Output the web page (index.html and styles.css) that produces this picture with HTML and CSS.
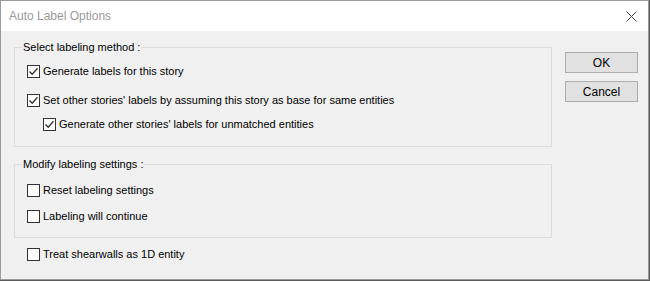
FILE: index.html
```html
<!DOCTYPE html>
<html lang="en">

<head>
    <meta charset="UTF-8">
    <title>Auto Label Options</title>
    <link rel="stylesheet" href="styles.css">
</head>

<body>
    <div id="dialog">
        <div class="titlebar">
            <span class="title">Auto Label Options</span>
            <svg class="close" width="11" height="11" viewBox="0 0 11 11">
                <path d="M0.5 0.5 L10.5 10.5 M10.5 0.5 L0.5 10.5" stroke="#444" stroke-width="1" fill="none" />
            </svg>
        </div>
        <div class="content">
            <div class="options">
                <fieldset class="group first">
                    <legend>Select labeling method :</legend>
                    <div class="row r1"><span class="box checked"></span>Generate labels for this story</div>
                    <div class="row r2"><span class="box checked"></span>Set other stories' labels by assuming this story as base for same entities</div>
                    <div class="row r3 sub"><span class="box checked"></span>Generate other stories' labels for unmatched entities</div>
                </fieldset>
                <fieldset class="group second">
                    <legend>Modify labeling settings :</legend>
                    <div class="row r4"><span class="box"></span>Reset labeling settings</div>
                    <div class="row r5"><span class="box"></span>Labeling will continue</div>
                </fieldset>
                <div class="row alone"><span class="box"></span>Treat shearwalls as 1D entity</div>
            </div>
            <div class="buttons">
                <div class="btn">OK</div>
                <div class="btn">Cancel</div>
            </div>
        </div>
    </div>
</body>

</html>
```

FILE: styles.css
```css
* {
    margin: 0;
    padding: 0;
    box-sizing: border-box;
}

body {
    background-color: #5a5a5a;
    font-family: "Liberation Sans", Arial, sans-serif;
    font-size: 11px;
    color: #000;
}

#dialog {
    width: 649px;
    height: 280px;
    border: 1px solid #9a9a9a;
    background-color: #f0f0f0;
}

.titlebar {
    height: 30px;
    background-color: #fff;
    display: flex;
    align-items: center;
    justify-content: space-between;
    padding: 0 11px 0 8px;
}

.title {
    font-size: 12px;
    color: #999;
}

.content {
    display: flex;
}

.options {
    margin-left: 13px;
    width: 538px;
}

.group {
    border: 1px solid #dcdcdc;
    padding: 0 0 15px 12px;
}

.group legend {
    margin-left: -5px;
    padding: 0 1px;
    line-height: 13px;
}

.group.first {
    margin-top: 10px;
}

.group.second {
    margin-top: 11px;
    padding-bottom: 14px;
}

.row {
    display: flex;
    align-items: center;
    height: 13px;
    line-height: 13px;
}

.box {
    width: 13px;
    height: 13px;
    border: 1px solid #333;
    background-color: #fff;
    margin-right: 3px;
    flex-shrink: 0;
    position: relative;
}

.box.checked::after {
    content: "";
    position: absolute;
    left: 1px;
    top: 1px;
    width: 9px;
    height: 9px;
    background: url("data:image/svg+xml;utf8,<svg xmlns='http://www.w3.org/2000/svg' width='9' height='9' viewBox='0 0 9 9'><path d='M0.5 4.5 L3.2 7.3 L8.5 1.2' stroke='%23333' stroke-width='1.3' fill='none'/></svg>") no-repeat;
}

.r1 {
    margin-top: 11px;
}

.r2 {
    margin-top: 16px;
}

.r3 {
    margin-top: 11px;
}

.sub {
    padding-left: 16px;
}

.r4 {
    margin-top: 13px;
}

.r5 {
    margin-top: 13px;
}

.alone {
    margin-top: 10px;
    margin-left: 13px;
}

.buttons {
    margin-left: 13px;
    margin-top: 21px;
    display: flex;
    flex-direction: column;
    gap: 8px;
}

.btn {
    width: 73px;
    height: 21px;
    border: 1px solid #adadad;
    background-color: #e1e1e1;
    display: flex;
    align-items: center;
    justify-content: center;
    font-size: 12px;
}
```
